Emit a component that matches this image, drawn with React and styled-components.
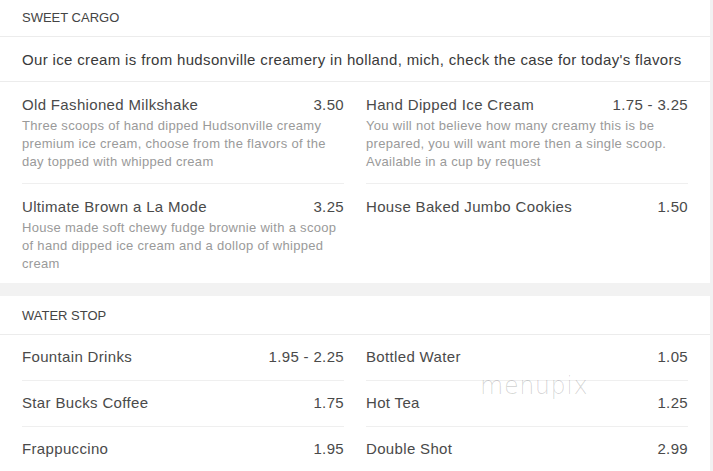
import React from 'react'
import styled, { createGlobalStyle } from 'styled-components'

const sections = [
  {
    title: 'Sweet Cargo',
    intro:
      "Our ice cream is from hudsonville creamery in holland, mich, check the case for today's flavors",
    items: [
      {
        name: 'Old Fashioned Milkshake',
        price: '3.50',
        desc: 'Three scoops of hand dipped Hudsonville creamy premium ice cream, choose from the flavors of the day topped with whipped cream',
      },
      {
        name: 'Hand Dipped Ice Cream',
        price: '1.75 - 3.25',
        desc: 'You will not believe how many creamy this is be prepared, you will want more then a single scoop. Available in a cup by request',
      },
      {
        name: 'Ultimate Brown a La Mode',
        price: '3.25',
        desc: 'House made soft chewy fudge brownie with a scoop of hand dipped ice cream and a dollop of whipped cream',
      },
      { name: 'House Baked Jumbo Cookies', price: '1.50' },
    ],
  },
  {
    title: 'Water Stop',
    items: [
      { name: 'Fountain Drinks', price: '1.95 - 2.25' },
      { name: 'Bottled Water', price: '1.05' },
      { name: 'Star Bucks Coffee', price: '1.75' },
      { name: 'Hot Tea', price: '1.25' },
      { name: 'Frappuccino', price: '1.95' },
      { name: 'Double Shot', price: '2.99' },
    ],
  },
]

function App() {
  return (
    <>
      <GlobalStyle />
      <Page>
        {sections.map((section) => (
          <Section key={section.title}>
            <SectionHeader>{section.title}</SectionHeader>
            {section.intro && <Intro>{section.intro}</Intro>}
            <ItemGrid>
              {section.items.map((item, i) => (
                <Item
                  key={item.name}
                  last={section.intro && i >= section.items.length - 2}
                  compact={!item.desc && !section.intro}
                >
                  <ItemTop>
                    <ItemName>{item.name}</ItemName>
                    <ItemPrice>{item.price}</ItemPrice>
                  </ItemTop>
                  {item.desc && <ItemDesc>{item.desc}</ItemDesc>}
                </Item>
              ))}
            </ItemGrid>
          </Section>
        ))}
        <Watermark>menupix</Watermark>
      </Page>
    </>
  )
}

const GlobalStyle = createGlobalStyle`
  body {
    margin: 0;
    background: #f2f2f2;
    font-family: "Liberation Sans", Arial, sans-serif;
    overflow: hidden;
  }
`

const Page = styled.div`
  position: relative;
  width: 710px;
  margin-top: -2px;
  display: flex;
  flex-direction: column;
  gap: 13px;
`

const Section = styled.section`
  background: #fff;
`

const SectionHeader = styled.div`
  height: 38px;
  display: flex;
  align-items: center;
  padding: 0 22px;
  border-bottom: 1px solid #ececec;
  text-transform: uppercase;
  font-size: 13px;
  color: #444;
`

const Intro = styled.div`
  height: 44px;
  display: flex;
  align-items: center;
  padding: 0 22px;
  border-bottom: 1px solid #ececec;
  font-size: 15px;
  letter-spacing: 0.34px;
  color: #3a3a3a;
`

const ItemGrid = styled.div`
  display: grid;
  grid-template-columns: 1fr 1fr;
  column-gap: 22px;
  padding: 0 22px;
`

const Item = styled.div`
  padding: ${(p) => (p.compact ? '12px 0 13px' : p.last ? '13px 0 10px' : '13px 0 12px')};
  border-bottom: ${(p) => (p.last ? 'none' : '1px solid #efefef')};
`

const ItemTop = styled.div`
  display: flex;
  justify-content: space-between;
  font-size: 15px;
  line-height: 20px;
  letter-spacing: 0.34px;
  color: #4a4a4a;
`

const ItemName = styled.span``

const ItemPrice = styled.span`
  white-space: nowrap;
`

const ItemDesc = styled.div`
  margin-top: 2px;
  font-size: 13px;
  line-height: 18px;
  letter-spacing: 0.3px;
  color: #9a9a9a;
`

const Watermark = styled.div`
  position: absolute;
  left: 480px;
  top: 374px;
  font-family: "DejaVu Sans", sans-serif;
  font-weight: 200;
  font-size: 24px;
  letter-spacing: 0.5px;
  color: rgba(0, 0, 0, 0.16);
  pointer-events: none;
`

export default App
